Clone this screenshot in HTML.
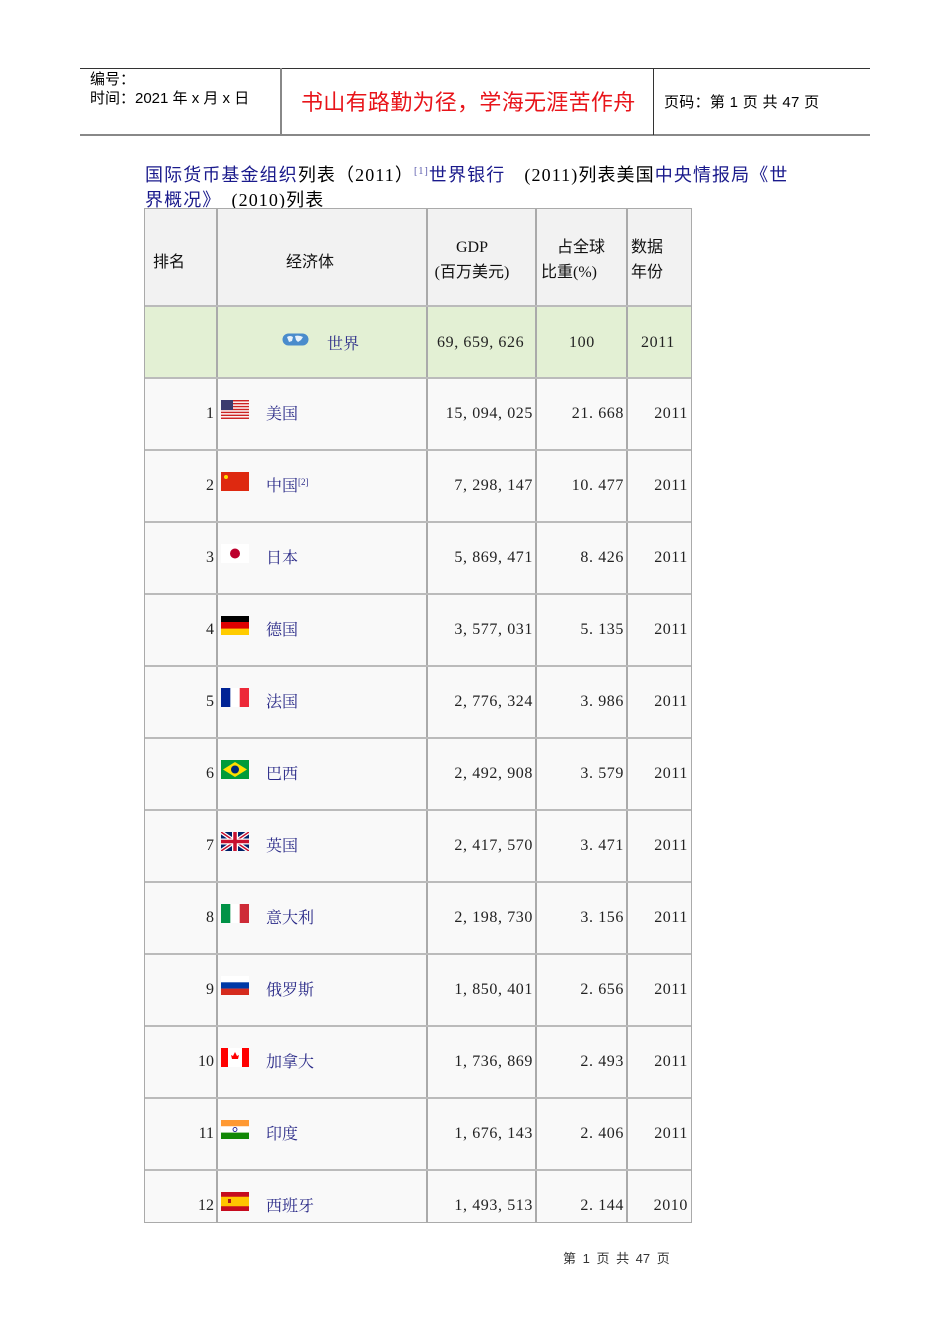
<!DOCTYPE html>
<html><head><meta charset="utf-8"><style>
*{margin:0;padding:0;box-sizing:border-box}
body{width:950px;height:1344px;background:#fff;position:relative;overflow:hidden;font-family:"Liberation Sans","Noto Sans CJK SC",sans-serif;color:#000}
.a{position:absolute;white-space:nowrap}
.s{font-family:"Liberation Serif","Noto Serif CJK SC",serif;font-size:16px;letter-spacing:0.6px;color:#222}
.l{color:#1a1a8c}
.hd{font-family:"Liberation Serif","Noto Sans CJK SC",serif;font-size:16px;color:#111}
.nm{font-family:"Liberation Serif","Noto Serif CJK SC",serif;font-size:16px;color:#2a2a88}
.f{position:absolute;left:221px;width:28px;height:19px}
</style></head><body>
<div class="a" style="left:80px;top:68px;width:790px;height:1px;background:#333"></div>
<div class="a" style="left:80px;top:134px;width:790px;height:2px;background:#888"></div>
<div class="a" style="left:280px;top:68px;width:2px;height:67px;background:#888"></div>
<div class="a" style="left:653px;top:68px;width:1px;height:67px;background:#333"></div>
<div class="a" style="left:90px;top:70px;font-size:15px;line-height:19px">编号：<br>时间：2021 年 x 月 x 日</div>
<div class="a" style="left:301px;top:89px;font-size:22px;letter-spacing:0.3px;color:#e8141a;line-height:28px">书山有路勤为径，学海无涯苦作舟</div>
<div class="a" style="left:664px;top:93px;font-size:15px;line-height:20px;letter-spacing:0.3px">页码：第 1 页 共 47 页</div>
<div class="a" style="left:145px;top:159px;font-size:18px;line-height:25px;letter-spacing:1.1px;font-family:'Liberation Serif','Noto Sans CJK SC',serif"><span class="l">国际货币基金组织</span>列表（2011）<sup style="font-size:10px;color:#55a;vertical-align:7px">[1]</sup><span class="l">世界银行</span>　(2011)列表美国<span class="l">中央情报局《世</span><br><span class="l">界概况》</span>　(2010)列表</div>
<div class="a" style="left:144px;top:208px;width:548px;height:1015px;background:#f9f9f9;border:1px solid #aaa"></div>
<div class="a" style="left:145px;top:209px;width:546px;height:96px;background:#f2f2f2"></div>
<div class="a" style="left:145px;top:306px;width:546px;height:71px;background:#e3f0d4"></div>
<div class="a" style="left:216px;top:208px;width:2px;height:1015px;background:#aaa"></div>
<div class="a" style="left:426px;top:208px;width:2px;height:1015px;background:#aaa"></div>
<div class="a" style="left:535px;top:208px;width:2px;height:1015px;background:#aaa"></div>
<div class="a" style="left:626px;top:208px;width:2px;height:1015px;background:#aaa"></div>
<div id="lines"></div>
<div class="a hd" style="left:153px;top:248px">排名</div>
<div class="a hd" style="left:286px;top:248px">经济体</div>
<div class="a hd" style="left:432px;top:235px;width:80px;text-align:center;line-height:25px">GDP<br>(百万美元)</div>
<div class="a hd" style="left:541px;top:235px;line-height:25px">　占全球<br>比重(%)</div>
<div class="a hd" style="left:631px;top:235px;line-height:25px">数据<br>年份</div>
<svg class="a" style="left:282px;top:333px" width="27" height="13" viewBox="0 0 27 13"><rect x="0.5" y="0.5" width="26" height="12" rx="6" fill="#4a8ccc"/><path d="M5 4q3-2 6 0l-1 4-3 1zM13 3q4-1 8 1l-2 3-3 2-2-2z" fill="#e8f2fb"/></svg>
<div class="a nm" style="left:327px;top:331px">世界</div>
<div class="a s" style="left:437px;top:334px">69, 659, 626</div>
<div class="a s" style="left:569px;top:334px">100</div>
<div class="a s" style="left:641px;top:334px">2011</div>
<script>
var d=[["美国","15, 094, 025","21. 668","2011"],["中国","7, 298, 147","10. 477","2011"],["日本","5, 869, 471","8. 426","2011"],["德国","3, 577, 031","5. 135","2011"],["法国","2, 776, 324","3. 986","2011"],["巴西","2, 492, 908","3. 579","2011"],["英国","2, 417, 570","3. 471","2011"],["意大利","2, 198, 730","3. 156","2011"],["俄罗斯","1, 850, 401","2. 656","2011"],["加拿大","1, 736, 869","2. 493","2011"],["印度","1, 676, 143","2. 406","2011"],["西班牙","1, 493, 513","2. 144","2010"]];
var fl=[
'<svg width="28" height="19"><rect width="28" height="19" fill="#fff"/>'+[0,2,4,6,8,10,12].map(function(i){return '<rect y="'+(i*1.46)+'" width="28" height="1.46" fill="#c22"/>'}).join('')+'<rect width="12" height="10" fill="#3c3b6e"/></svg>',
'<svg width="28" height="19"><rect width="28" height="19" fill="#de2910"/><circle cx="5" cy="5" r="2" fill="#ffde00"/></svg>',
'<svg width="28" height="19"><rect width="28" height="19" fill="#fff"/><circle cx="14" cy="9.5" r="5" fill="#bc002d"/></svg>',
'<svg width="28" height="19"><rect width="28" height="7" fill="#000"/><rect y="6" width="28" height="7" fill="#d00"/><rect y="12.6" width="28" height="6.4" fill="#fc0"/></svg>',
'<svg width="28" height="19"><rect width="9.4" height="19" fill="#002395"/><rect x="9.4" width="9.3" height="19" fill="#fff"/><rect x="18.7" width="9.3" height="19" fill="#ed2939"/></svg>',
'<svg width="28" height="19"><rect width="28" height="19" fill="#009b3a"/><path d="M14 2L26 9.5 14 17 2 9.5z" fill="#fedf00"/><circle cx="14" cy="9.5" r="4" fill="#002776"/></svg>',
'<svg width="28" height="19"><rect width="28" height="19" fill="#012169"/><path d="M0 0L28 19M28 0L0 19" stroke="#fff" stroke-width="4"/><path d="M0 0L28 19M28 0L0 19" stroke="#c8102e" stroke-width="1.5"/><path d="M14 0V19M0 9.5H28" stroke="#fff" stroke-width="6"/><path d="M14 0V19M0 9.5H28" stroke="#c8102e" stroke-width="3.5"/></svg>',
'<svg width="28" height="19"><rect width="9.4" height="19" fill="#009246"/><rect x="9.4" width="9.3" height="19" fill="#fff"/><rect x="18.7" width="9.3" height="19" fill="#ce2b37"/></svg>',
'<svg width="28" height="19"><rect width="28" height="6.4" fill="#fff"/><rect y="6.3" width="28" height="6.4" fill="#0039a6"/><rect y="12.6" width="28" height="6.4" fill="#d52b1e"/></svg>',
'<svg width="28" height="19"><rect width="28" height="19" fill="#fff"/><rect width="7" height="19" fill="#f00"/><rect x="21" width="7" height="19" fill="#f00"/><path d="M14 4l2 4 2-1-1 4h-6l-1-4 2 1z" fill="#f00"/></svg>',
'<svg width="28" height="19"><rect width="28" height="6.4" fill="#f93"/><rect y="6.3" width="28" height="6.4" fill="#fff"/><rect y="12.6" width="28" height="6.4" fill="#128807"/><circle cx="14" cy="9.5" r="2" fill="none" stroke="#008" stroke-width="0.8"/></svg>',
'<svg width="28" height="19"><rect width="28" height="19" fill="#c60b1e"/><rect y="4.75" width="28" height="9.5" fill="#ffc400"/><rect x="7" y="7" width="3" height="4" fill="#ad1519"/></svg>'];
var h='';
h+='<div class="a" style="left:145px;top:305px;width:546px;height:2px;background:#bbb"></div>';
for(var i=0;i<12;i++){var t=377+72*i;
h+='<div class="a" style="left:145px;top:'+t+'px;width:546px;height:2px;background:#bbb"></div>';
h+='<div class="a s" style="left:150px;top:'+(t+28)+'px;width:64px;text-align:right;letter-spacing:0">'+(i+1)+'</div>';
h+='<div class="f" style="top:'+(t+23)+'px">'+fl[i]+'</div>';
h+='<div class="a nm" style="left:266px;top:'+(t+24)+'px">'+d[i][0]+(i==1?'<sup style="font-size:9px;vertical-align:6px">[2]</sup>':'')+'</div>';
h+='<div class="a s" style="left:428px;top:'+(t+28)+'px;width:105px;text-align:right">'+d[i][1]+'</div>';
h+='<div class="a s" style="left:537px;top:'+(t+28)+'px;width:87px;text-align:right">'+d[i][2]+'</div>';
h+='<div class="a s" style="left:628px;top:'+(t+28)+'px;width:60px;text-align:right">'+d[i][3]+'</div>';}
document.getElementById('lines').innerHTML=h;
</script>
<div class="a" style="left:563px;top:1248px;font-size:13px;color:#333;word-spacing:3px">第 1 页 共 47 页</div>
</body></html>
